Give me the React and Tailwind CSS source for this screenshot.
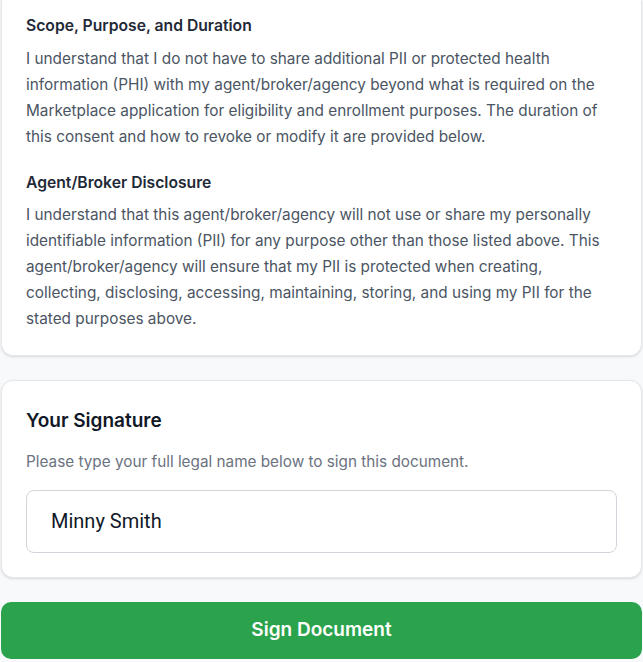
export default function App() {
  return (
    <div className="min-h-[662px] bg-[#f8f9fb] px-[1px] font-['Inter',sans-serif]">
      <div className="flex flex-col">
        <div className="rounded-b-xl border border-t-0 border-[#e5e7eb] bg-white px-6 pt-[15px] pb-[23px] shadow-sm">
          <h3 className="text-[15.7px] leading-[22px] font-semibold text-[#1f2937]">Scope, Purpose, and Duration</h3>
          <p className="mt-[9px] text-[15.35px] leading-[26px] text-[#4b5563]">
            I understand that I do not have to share additional PII or protected health information (PHI) with my
            agent/broker/agency beyond what is required on the Marketplace application for eligibility and enrollment
            purposes. The duration of this consent and how to revoke or modify it are provided below.
          </p>
          <h3 className="mt-[22px] text-[15.7px] leading-[22px] font-semibold text-[#1f2937]">Agent/Broker Disclosure</h3>
          <p className="mt-[8px] text-[15.35px] leading-[26px] text-[#4b5563]">
            I understand that this agent/broker/agency will not use or share my personally identifiable information
            (PII) for any purpose other than those listed above. This agent/broker/agency will ensure that my PII is
            protected when creating, collecting, disclosing, accessing, maintaining, storing, and using my PII for the
            stated purposes above.
          </p>
        </div>

        <div className="mt-6 rounded-xl border border-[#e5e7eb] bg-white p-6 shadow-sm">
          <h2 className="text-[19px] leading-8 font-semibold text-[#111827]">Your Signature</h2>
          <p className="mt-3 text-[15.3px] leading-[26px] text-[#6b7280]">
            Please type your full legal name below to sign this document.
          </p>
          <input
            type="text"
            defaultValue="Minny Smith"
            className="mt-[15px] w-full rounded-lg border border-[#d1d5db] bg-white px-6 py-[16px] font-['Roboto',sans-serif] text-[20px] leading-[29px] text-[#111827] outline-none"
          />
        </div>

        <button className="mt-6 h-[57px] w-full rounded-[10px] bg-[#2ba24c] text-[19px] font-semibold text-white">
          Sign Document
        </button>
      </div>
    </div>
  );
}
